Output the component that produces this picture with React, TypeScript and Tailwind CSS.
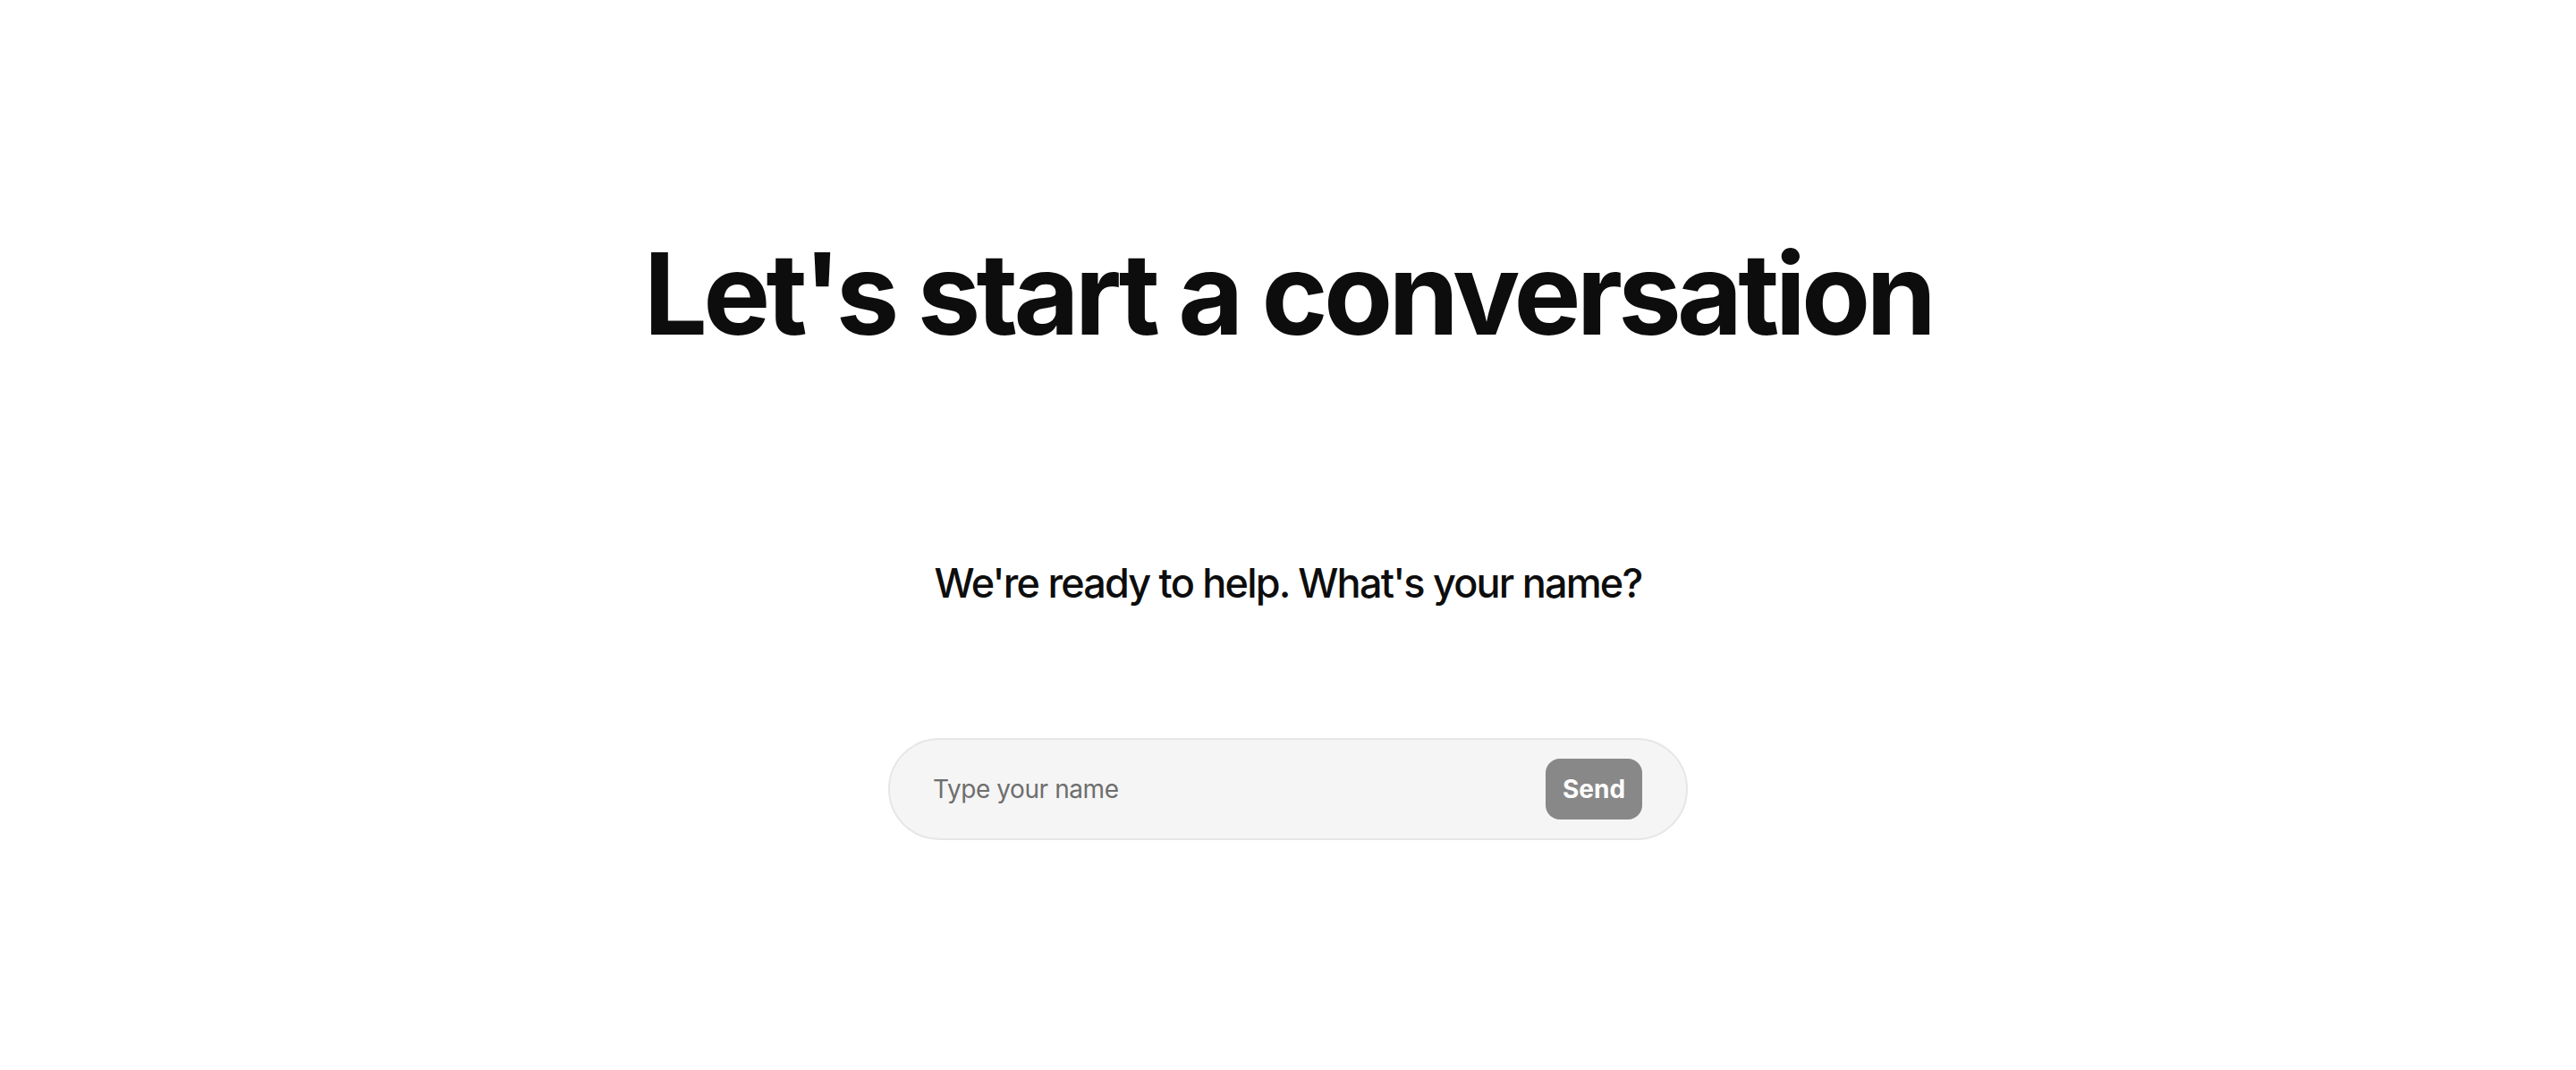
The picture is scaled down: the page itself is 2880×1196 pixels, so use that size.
import React, { useState } from "react";

export default function App() {
  const [name, setName] = useState("");

  return (
    <div
      className="min-h-screen w-full bg-white flex flex-col items-center text-[#0d0d0d]"
      style={{ fontFamily: "Inter, 'Liberation Sans', sans-serif" }}
    >
      <h1 className="mt-[265px] text-[126px] leading-none font-bold tracking-[-0.038em] whitespace-nowrap">
        Let's start a conversation
      </h1>

      <p className="mt-[238px] text-[45px] leading-none font-medium tracking-[-0.04em] whitespace-nowrap">
        We're ready to help. What's your name?
      </p>

      <form
        className="mt-[151px] w-[894px] h-[114px] rounded-full bg-[#f5f5f5] border-2 border-[#e6e6e6] flex items-center pl-[48px] pr-[49px]"
        onSubmit={(e) => e.preventDefault()}
      >
        <input
          value={name}
          onChange={(e) => setName(e.target.value)}
          placeholder="Type your name"
          className="flex-1 bg-transparent outline-none text-[28px] text-[#1a1a1a] placeholder:text-[#6e6e6e] tracking-[-0.015em]"
        />
        <button
          type="submit"
          className="w-[108px] h-[68px] rounded-[16px] bg-[#888888] text-white text-[28px] font-bold flex items-center justify-center"
        >
          Send
        </button>
      </form>
    </div>
  );
}
